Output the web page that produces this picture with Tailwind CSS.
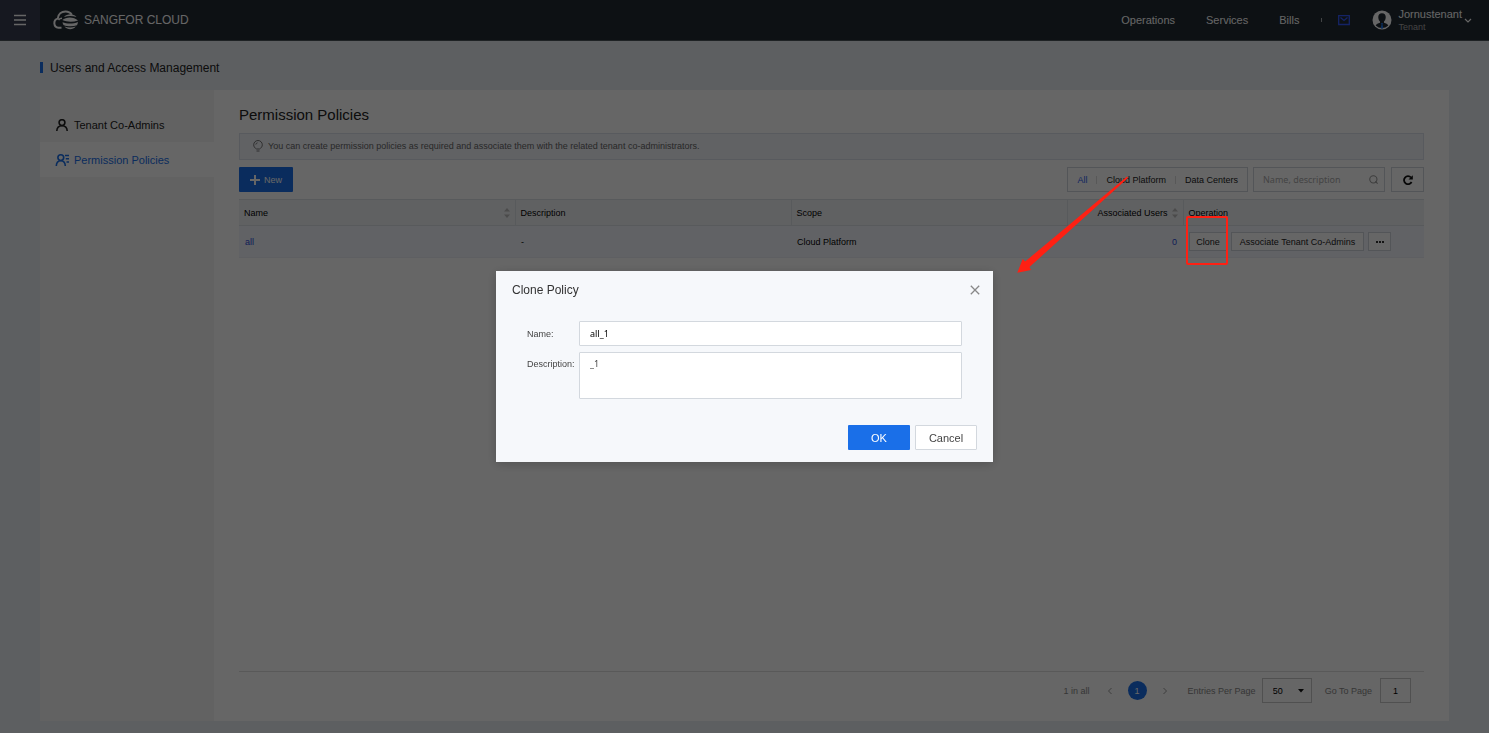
<!DOCTYPE html>
<html lang="en">
<head>
<meta charset="utf-8">
<title>Users and Access Management - Sangfor Cloud</title>
<script src="https://cdn.jsdelivr.net/npm/@tailwindcss/browser@4"></script>
</head>
<body class="relative flex min-h-screen flex-col bg-[#e9edf2] text-[9px] leading-3 text-[#222] [font-family:'Liberation_Sans',Arial,sans-serif]">

<header class="flex h-[41px] items-center border-b border-white/20 bg-[#212b33] text-white">
  <button type="button" aria-label="Menu" class="flex h-10 w-10 items-center justify-center bg-[#383d50]">
    <svg class="h-3 w-3" viewBox="0 0 12 12" stroke="#fff" stroke-width="1.5"><path d="M0 1.500h12M0 6h12M0 10.500h12"/></svg>
  </button>
  <a href="#" class="ml-3 flex items-center gap-1 text-xs">
    <svg class="h-5 w-7" viewBox="0 0 28 20" fill="none" stroke="#fff">
      <path d="M9.500 17.800H6.500A4.700 4.700 0 0 1 5.800 8.600C6.200 4 9.500 1.500 13.500 1.500c3 0 5 1.200 6.300 3.300" stroke-width="2"/>
      <path d="M10 8.300a4.500 4.500 0 0 0-3.500 1.700" stroke-width="1.500"/>
      <g fill="#fff" stroke="none">
        <path d="M12 7c3-3.600 9.500-3.600 12.500 0-4-1.300-8.500-1.300-12.500 0z"/>
        <path d="M10.300 10c4-3.400 11.500-3.400 15.700.5-5 1.700-11 1.700-15.700-.5z"/>
        <path d="M10.500 12.300c4.500 1.800 10.700 1.800 15.500-.3-.2 1.400-.5 2.300-1 3.200-4 1.600-9.500 1.500-13.500-.3-.5-.8-.8-1.600-1-2.600z"/>
        <path d="M12.500 16.600c3.500 1.200 7.500 1.200 11.300 0-3 3.600-8.300 3.600-11.300 0z"/>
      </g>
    </svg>
    <span>SANGFOR CLOUD</span>
  </a>
  <nav class="ml-auto flex items-center text-[11px]">
    <a href="#" class="mr-[31px]">Operations</a>
    <a href="#" class="mr-[31px]">Services</a>
    <a href="#">Bills</a>
    <span class="mr-4 ml-[22px] h-1 w-px bg-white/60"></span>
    <a href="#" aria-label="Messages">
      <svg class="h-3 w-3" viewBox="0 0 12 12" fill="none" stroke="#3459ff" stroke-width="1.300"><path d="M.7 1.700h10.600v8.800H.7z"/><path d="M2.500 3.500 6 6.500l3.500-3"/></svg>
    </a>
  </nav>
  <button type="button" class="mr-[17px] ml-[22px] flex items-center text-left">
    <svg class="h-5 w-5" viewBox="0 0 20 20">
      <circle cx="10" cy="10" r="9.500" fill="#fff"/>
      <path d="M10 3.200c2.600 0 3.900 1.700 3.700 4.200-.1 1.800-.8 3.200-1.700 4.200v1.200c2 .6 3.600 1.200 4.300 2.700a9 9 0 0 1-12.600 0c.7-1.500 2.300-2.100 4.300-2.700v-1.200C7.100 10.600 6.400 9.200 6.300 7.400 6.100 4.900 7.400 3.200 10 3.200z" fill="#212b33"/>
      <path d="M9 13h2l-.5 1.500L11.300 18 10 19l-1.300-1 .8-3.500z" fill="#1a73e8"/>
    </svg>
    <span class="ml-1.5 flex flex-col"><span class="text-[11px] leading-[14px]">Jornustenant</span><span class="text-[9px] text-[#aaa]">Tenant</span></span>
    <svg class="ml-0.5 h-2 w-2" viewBox="0 0 8 8" fill="none" stroke="#fff" stroke-width="1.200"><path d="m1 3 3 3 3-3"/></svg>
  </button>
</header>

<div class="flex grow flex-col px-10 pb-3">
  <div class="flex h-[49px] items-center gap-[7px] pt-1 text-xs">
    <span class="h-[11px] w-[3px] bg-[#1a6fe8]"></span>
    <h1>Users and Access Management</h1>
  </div>

  <div class="flex grow bg-white">
    <nav class="w-[174px] shrink-0 bg-[#f5f5f5] pt-[18px] text-[11px]">
      <a href="#" class="flex h-[34px] items-center gap-1.5 pl-4">
        <svg class="h-3 w-3" viewBox="0 0 12 12" fill="none" stroke="#222" stroke-width="1.600"><circle cx="6" cy="3.600" r="2.900"/><path d="M.8 12c.1-3.200 2-5.300 5.200-5.300S11.100 8.800 11.200 12"/></svg>
        Tenant Co-Admins
      </a>
      <a href="#" class="flex h-[35px] items-center gap-1.5 bg-white pl-4 text-[#1a6fe8]">
        <svg class="h-3 w-3 overflow-visible" viewBox="0 0 12 12" fill="none" stroke="#1a6fe8" stroke-width="1.600"><circle cx="4.800" cy="3.600" r="2.900"/><path d="M.3 12c.1-3.200 1.700-5.300 4.500-5.300S9.200 8.800 9.300 12M9 1.500h4M9.800 4.800H13M10.500 8H13"/></svg>
        Permission Policies
      </a>
    </nav>

    <main class="flex min-w-0 grow flex-col px-[25px] pt-3.5">
      <h2 class="text-[15px] leading-[22px]">Permission Policies</h2>
      <p class="mt-[7px] flex h-[27px] items-center gap-1 border border-[#dde1ec] bg-[#f2f4fa] pb-px pl-3 text-[#666]">
        <svg class="h-3 w-3" viewBox="0 0 12 12" fill="none" stroke="#777" stroke-width="1"><path d="M4.500 9C2.800 8 1.700 6.700 1.700 4.800a4.300 4.300 0 0 1 8.600 0C10.300 6.700 9.200 8 7.500 9zM4.500 11h3M3.800 4.500C4 3.500 4.600 3 5.500 2.800"/></svg>
        You can create permission policies as required and associate them with the related tenant co-administrators.
      </p>

      <div class="mt-[7px] flex h-[25px] items-stretch">
        <button type="button" class="flex w-[54px] items-center justify-center gap-1 rounded-[1px] bg-[#1a6fe8] text-white">
          <svg class="h-2.5 w-2.5" viewBox="0 0 10 10" stroke="#fff" stroke-width="2"><path d="M0 5h10M5 0v10"/></svg>New
        </button>
        <div class="ml-auto flex items-center border border-[#d0d4dc] px-[9px]">
          <button type="button" class="text-[#2b5bf0]">All</button>
          <span class="mx-[9px] h-2 w-px bg-[#ddd]"></span>
          <button type="button">Cloud Platform</button>
          <span class="mx-[9px] h-2 w-px bg-[#ddd]"></span>
          <button type="button">Data Centers</button>
        </div>
        <label class="ml-[5px] flex w-[132px] items-center border border-[#d0d4dc] pr-1.5 pl-[9px]">
          <input type="text" aria-label="Search" placeholder="Name, description" class="min-w-0 grow outline-none placeholder:text-[#aaa] [font-family:'Noto_Sans',sans-serif]">
          <svg class="h-[11px] w-[11px]" viewBox="0 0 11 11" fill="none" stroke="#999" stroke-width="1.300"><circle cx="5.300" cy="5.300" r="4.400"/><path d="m7.800 7.800 2.700 2.700"/></svg>
        </label>
        <button type="button" aria-label="Refresh" class="ml-1.5 flex w-[33px] items-center justify-center border border-[#d0d4dc]">
          <svg class="h-2.5 w-2.5" viewBox="0 0 10 10" fill="none" stroke="#111" stroke-width="1.800"><path d="M8.600 7A4 4 0 1 1 8 2.500"/><path d="M9.800.2v4.300H5.500z" fill="#111" stroke="none"/></svg>
        </button>
      </div>

      <table class="mt-[7px] w-full table-fixed border-collapse text-left">
        <colgroup><col class="w-[276px]"><col class="w-[276px]"><col class="w-[276px]"><col class="w-[116px]"><col class="w-[241px]"></colgroup>
        <thead>
          <tr class="h-[26px] border-y border-[#dde1e6] bg-[#f0f2f5] text-black">
            <th class="px-[5px] font-normal"><span class="flex items-center justify-between">Name
              <svg class="h-2.5 w-1.5" viewBox="0 0 6 10" fill="#bbb"><path d="m3 0 3 3.500H0zM3 10l3-3.500H0z"/></svg></span></th>
            <th class="border-l border-[#dde1e6] px-[5px] font-normal">Description</th>
            <th class="border-l border-[#dde1e6] px-[5px] font-normal">Scope</th>
            <th class="border-l border-[#dde1e6] px-[5px] font-normal"><span class="flex items-center justify-end gap-1">Associated Users
              <svg class="h-2.5 w-1.5" viewBox="0 0 6 10" fill="#bbb"><path d="m3 0 3 3.500H0zM3 10l3-3.500H0z"/></svg></span></th>
            <th class="border-l border-[#dde1e6] px-[5px] font-normal">Operation</th>
          </tr>
        </thead>
        <tbody>
          <tr class="h-8 border-b border-[#eaedf5] bg-[#f3f5fc] text-black">
            <td class="px-1.5"><a href="#" class="text-[#2b4bd8]">all</a></td>
            <td class="px-1.5">-</td>
            <td class="px-1.5">Cloud Platform</td>
            <td class="px-1.5 text-right"><a href="#" class="text-[#2b4bd8]">0</a></td>
            <td class="px-1.5">
              <div class="flex gap-1 text-[#222]">
                <button type="button" class="h-[19px] w-[38px] border border-[#d0d4dc] bg-white">Clone</button>
                <button type="button" class="h-[19px] w-[133px] border border-[#d0d4dc] bg-white">Associate Tenant Co-Admins</button>
                <button type="button" aria-label="More" class="flex h-[19px] w-[23px] items-center justify-center border border-[#d0d4dc] bg-white"><svg class="h-1 w-2" viewBox="0 0 8 4" fill="#333"><path d="M0 1h2v2H0zM3 1h2v2H3zM6 1h2v2H6z"/></svg></button>
              </div>
            </td>
          </tr>
        </tbody>
      </table>

      <footer class="mt-auto flex h-[50px] items-start justify-end border-t border-[#dedede] pt-1.5 pr-[13px] text-[#888]">
        <div class="flex h-[25px] items-center">
          <span>1 in all</span>
          <button type="button" aria-label="Previous page" class="ml-4"><svg class="h-2 w-2" viewBox="0 0 8 8" fill="none" stroke="#999"><path d="M5.500 1 2.500 4l3 3"/></svg></button>
          <button type="button" aria-current="page" class="mx-3.5 h-[19px] w-[19px] rounded-full bg-[#1a6fe8] text-white">1</button>
          <button type="button" aria-label="Next page"><svg class="h-2 w-2" viewBox="0 0 8 8" fill="none" stroke="#999"><path d="m2.500 1 3 3-3 3"/></svg></button>
          <label for="per-page" class="mr-1.5 ml-[19px]">Entries Per Page</label>
          <span class="relative flex items-center">
            <select id="per-page" class="h-[25px] w-[50px] appearance-none border border-[#c8c8c8] pl-2.5 text-black"><option>50</option></select>
            <svg class="pointer-events-none absolute right-2 h-1 w-1.5" viewBox="0 0 6 4" fill="#111"><path d="M0 0h6L3 3.500z"/></svg>
          </span>
          <label for="go-page" class="mr-2 ml-[13px]">Go To Page</label>
          <input id="go-page" type="text" value="1" class="h-[25px] w-[31px] border border-[#c8c8c8] text-center text-black">
        </div>
      </footer>
    </main>
  </div>
</div>

<div class="fixed inset-0 flex items-center justify-center bg-black/60">
  <form role="dialog" aria-labelledby="dialog-title" class="w-[497px] bg-[#f6f8fb] px-4 pt-[11px] pb-3 text-[#444] shadow-[0_2px_10px_rgba(0,0,0,0.2)]">
    <div class="flex items-center justify-between">
      <h2 id="dialog-title" class="text-xs leading-4 text-[#333]">Clone Policy</h2>
      <button type="button" aria-label="Close" class="-mr-1.5 flex h-4 w-4 items-center justify-center"><svg class="h-2.5 w-2.5" viewBox="0 0 10 10" fill="none" stroke="#888" stroke-width="1.300"><path d="m.8.8 8.400 8.400M9.200.8.800 9.200"/></svg></button>
    </div>
    <div class="mt-[23px] flex items-center pr-[15px] pl-[15px]">
      <label for="name" class="w-[52px]">Name:</label>
      <input id="name" type="text" value="all_1" class="h-[25px] min-w-0 grow rounded-[1px] border border-[#d3d8de] bg-white px-2.5 text-black [font-family:'Noto_Sans',sans-serif]">
    </div>
    <div class="mt-1.5 flex items-start pr-[15px] pl-[15px]">
      <label for="description" class="w-[52px] pt-1.5">Description:</label>
      <textarea id="description" class="h-[47px] min-w-0 grow resize-none rounded-[1px] border border-[#d3d8de] bg-white px-2.5 py-[5px] [font-family:'Noto_Sans',sans-serif]">_1</textarea>
    </div>
    <div class="mt-[26px] flex justify-end gap-[5px] text-[11px]">
      <button type="button" class="h-[25px] w-[62px] rounded-[1px] bg-[#1a6fe8] text-white">OK</button>
      <button type="button" class="h-[25px] w-[62px] rounded-[1px] border border-[#d3d8de] bg-white">Cancel</button>
    </div>
  </form>
</div>

<svg class="pointer-events-none absolute top-[176px] right-[361px] h-[97px] w-[111px]" viewBox="0 0 111 97" fill="#ff2013"><path d="M110 .5 111 2 12.500 91l1.500 3L.3 96.700 5.700 83l2.500 2.500z"/></svg>
<div class="pointer-events-none absolute top-[216px] right-[261px] h-[49px] w-[42px] rounded-[2px] border-2 border-[#ff2013]"></div>

</body>
</html>
